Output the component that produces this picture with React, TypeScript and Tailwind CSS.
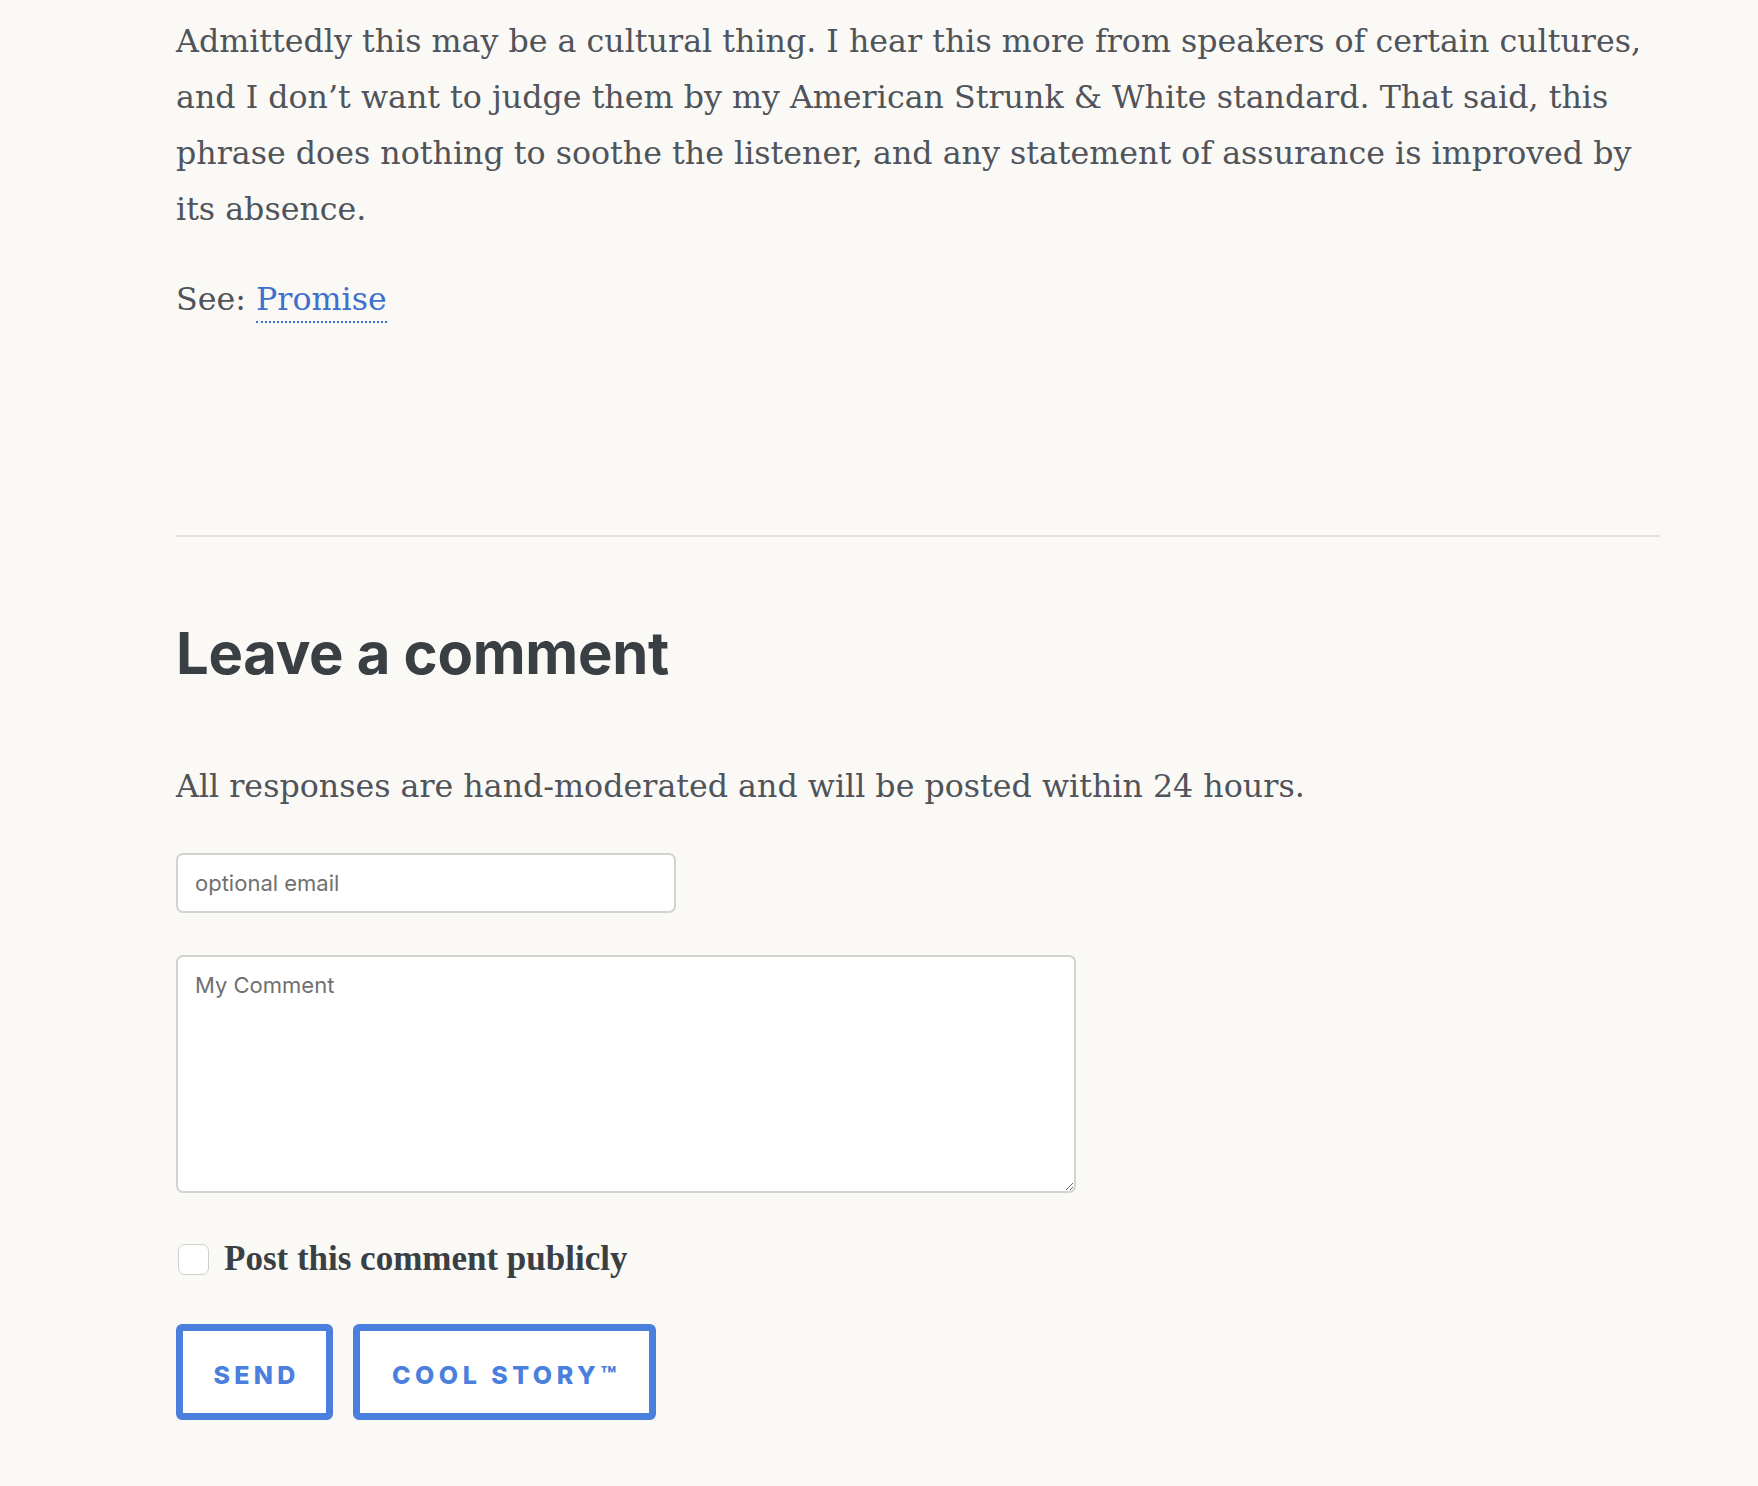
export default function App() {
  return (
    <div className="min-h-screen bg-[#faf9f6] pl-[176px] pt-[13px] pb-[60px]">
      <div className="w-[1484px]">
        <p className="font-['DejaVu_Serif',serif] text-[31.7px] leading-[56px] text-[#50545a] whitespace-nowrap">
          Admittedly this may be a cultural thing. I hear this more from speakers of certain cultures,
          <br />
          and I don’t want to judge them by my American Strunk &amp; White standard. That said, this
          <br />
          phrase does nothing to soothe the listener, and any statement of assurance is improved by
          <br />
          its absence.
        </p>
        <p className="mt-[34px] font-['DejaVu_Serif',serif] text-[31.7px] leading-[56px] text-[#50545a]">
          See:{" "}
          <a
            href="#"
            className="text-[#3f70cf] border-b-2 border-dotted border-[#3f70cf] pb-[4px]"
          >
            Promise
          </a>
        </p>

        <hr className="mt-[208px] h-[2px] border-0 bg-[#e2e1de]" />

        <h2 className="mt-[81px] font-['Inter',sans-serif] font-bold text-[58px] leading-[70px] tracking-[-0.3px] text-[#3a3f44]">
          Leave a comment
        </h2>

        <p className="mt-[70px] font-['DejaVu_Serif',serif] text-[31.7px] leading-[56px] text-[#50545a]">
          All responses are hand-moderated and will be posted within 24 hours.
        </p>

        <input
          type="email"
          placeholder="optional email"
          className="mt-[39px] block w-[500px] h-[60px] rounded-[7px] border-2 border-[#d2d2d0] bg-white px-[17px] font-['Inter',sans-serif] text-[22px] text-[#333] placeholder:text-[#707070] outline-none"
        />

        <textarea
          placeholder="My Comment"
          className="mt-[42px] block w-[900px] h-[238px] rounded-[7px] border-2 border-[#d2d2d0] bg-white px-[17px] pt-[15px] font-['Inter',sans-serif] text-[22px] leading-[27px] text-[#333] placeholder:text-[#707070] outline-none"
        />

        <label className="mt-[47px] flex items-center gap-[15px]">
          <input
            type="checkbox"
            className="ml-[2px] appearance-none w-[31px] h-[31px] rounded-[7px] border border-[#cfcfcf] bg-white"
          />
          <span className="font-['Liberation_Serif',serif] font-bold text-[35px] leading-[38px] text-[#3a3f44]">
            Post this comment publicly
          </span>
        </label>

        <div className="mt-[46px] flex gap-[20px]">
          <button className="w-[157px] h-[96px] rounded-[6px] border-[7px] border-[#4a7fdd] bg-white pt-[8px] pl-[4px] font-['Inter',sans-serif] font-extrabold text-[25px] tracking-[0.17em] text-[#4a7fdd]">
            SEND
          </button>
          <button className="w-[303px] h-[96px] rounded-[6px] border-[7px] border-[#4a7fdd] bg-white pt-[8px] pl-[4px] font-['Inter',sans-serif] font-extrabold text-[25px] tracking-[0.18em] text-[#4a7fdd]">
            COOL STORY™
          </button>
        </div>
      </div>
    </div>
  );
}
